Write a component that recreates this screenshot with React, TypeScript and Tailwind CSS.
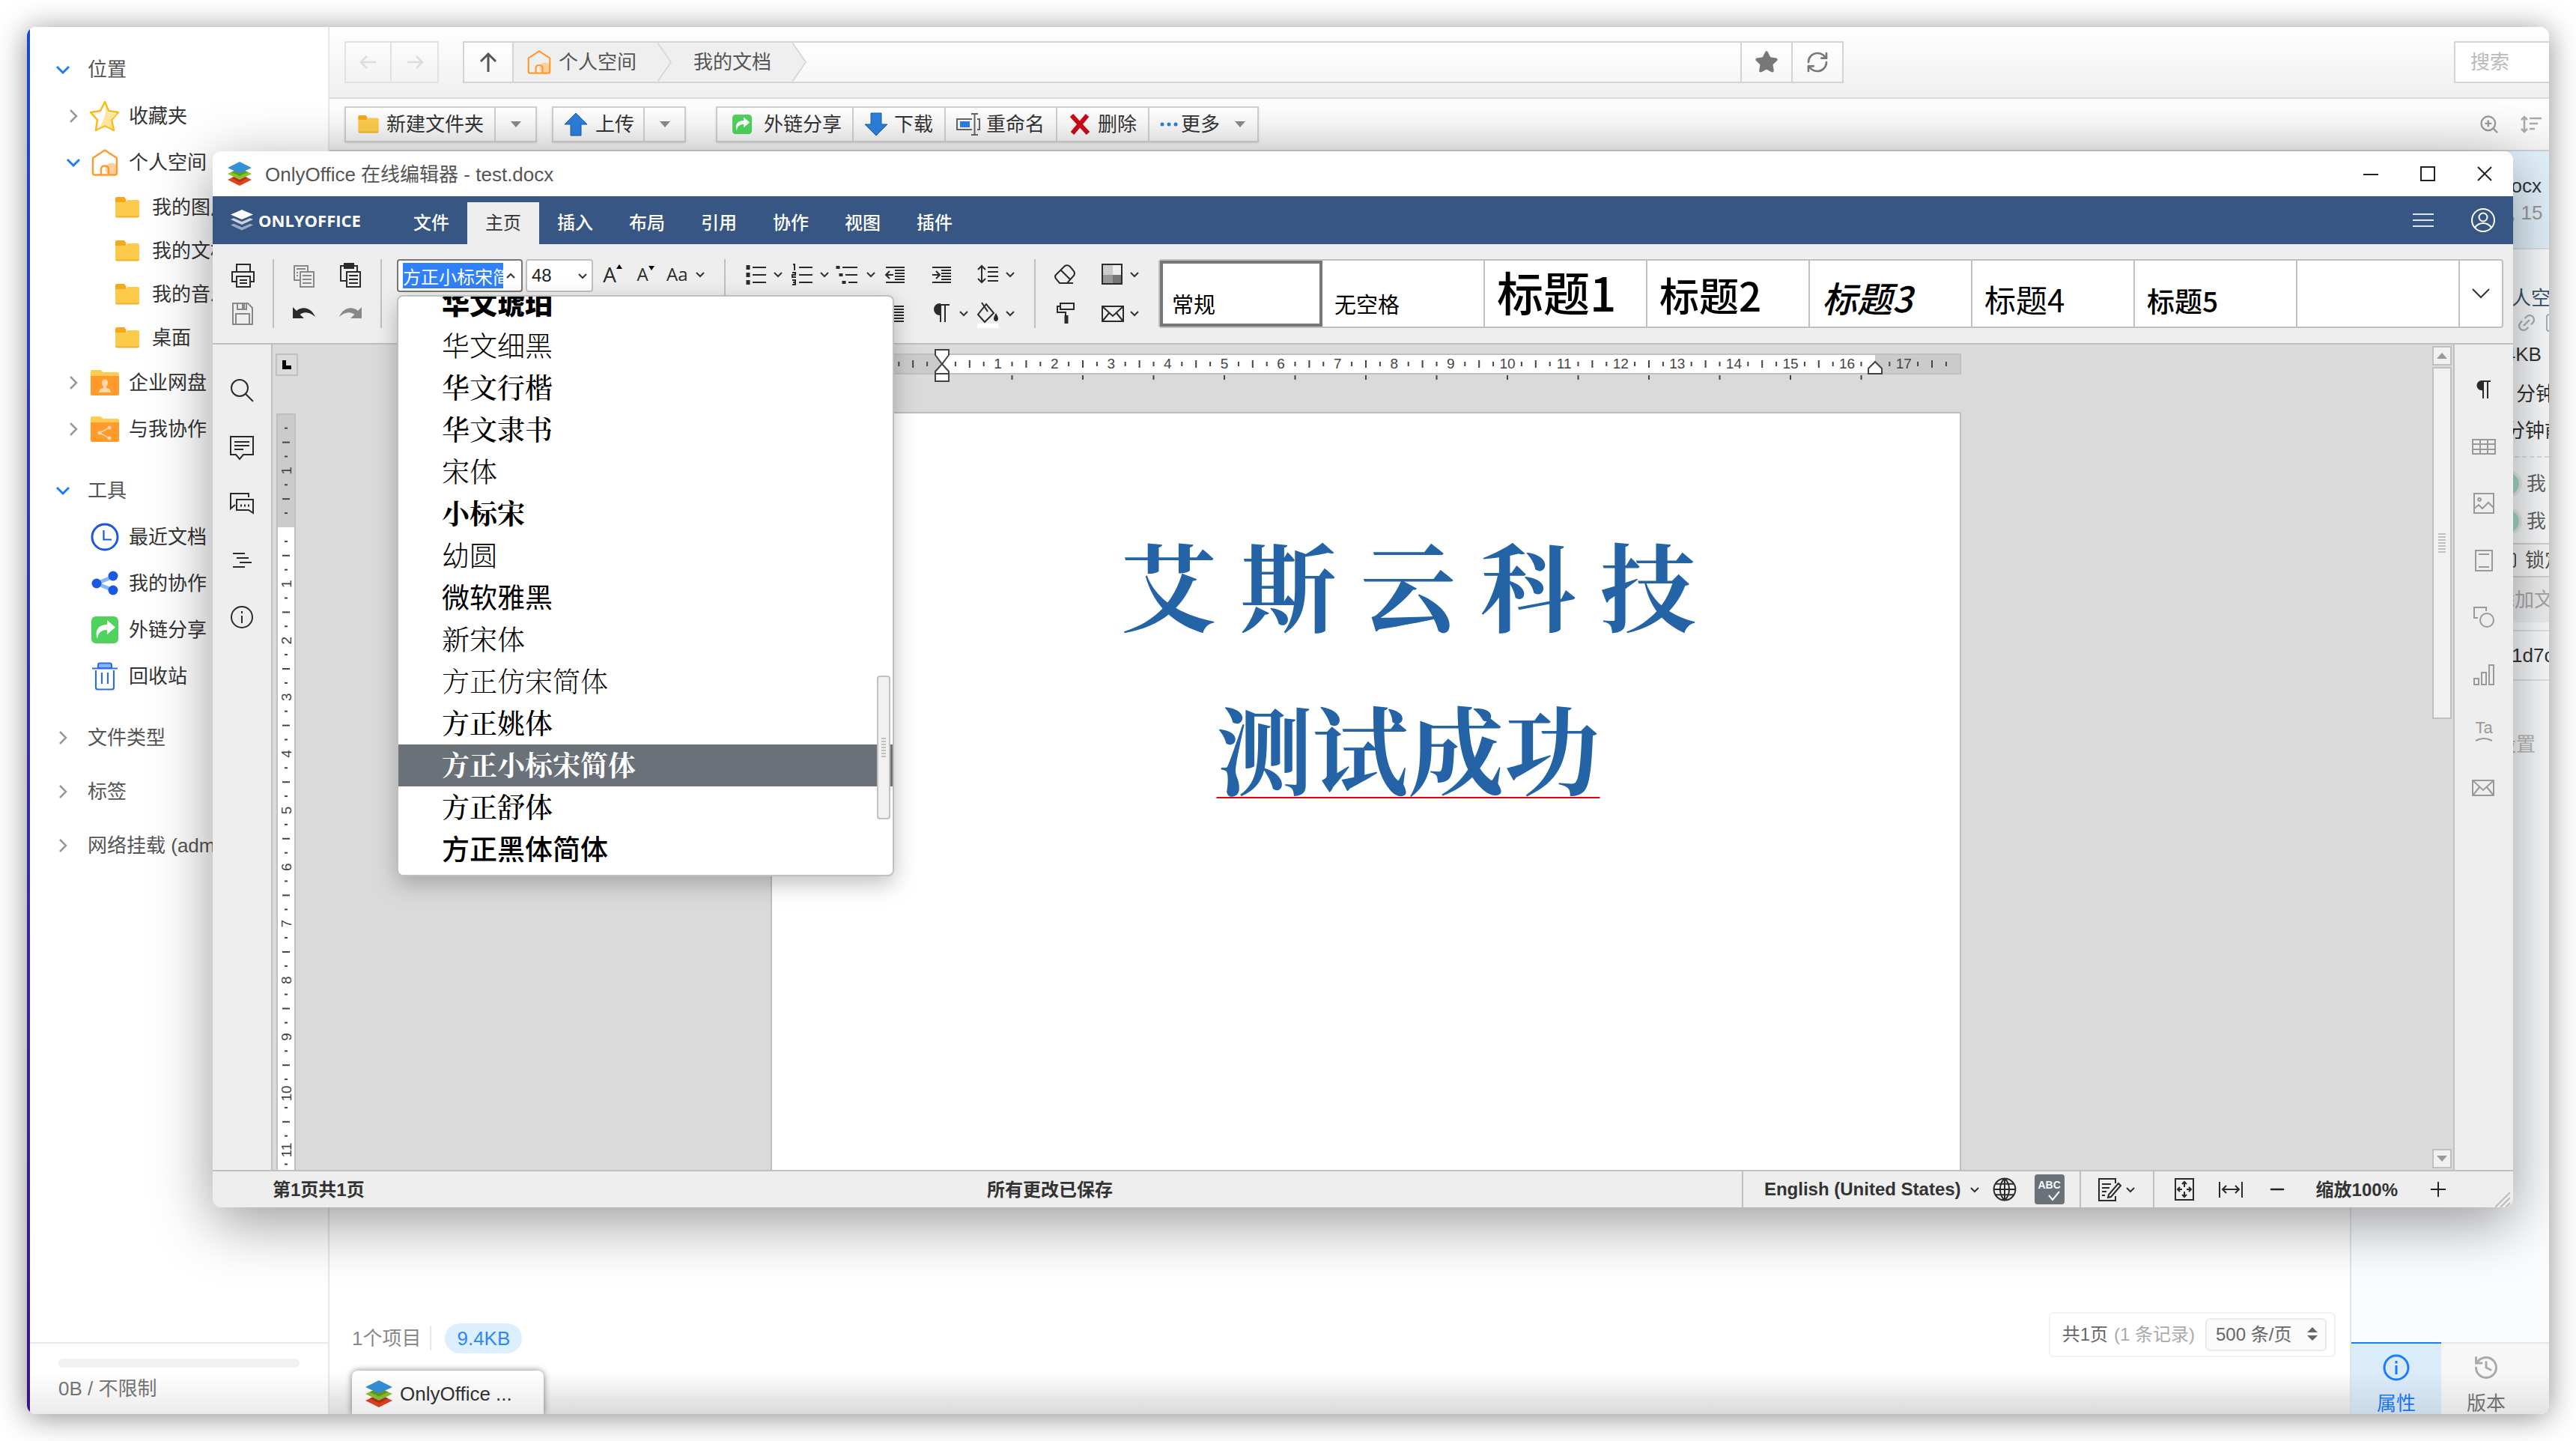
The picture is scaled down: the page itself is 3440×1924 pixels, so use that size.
import type { ReactNode } from 'react';
import { Plus, Minus, RefreshCw, Star, ZoomIn, Link2, History } from 'lucide-react';

const FONT = "font-['Liberation_Sans','Noto_Sans_CJK_SC',sans-serif]";
const SERIF = "font-['Liberation_Serif','Noto_Serif_CJK_SC','Noto_Sans_CJK_SC',serif]";

interface IconProps {
  size?: number;
  className?: string;
  strokeWidth?: number;
  children: ReactNode;
}

// 20x20 line icon shared by the editor toolbars
const Icon = ({ size = 40, className = 'text-[#2a2a2a]', strokeWidth = 1, children }: IconProps) => (
  <svg
    width={size}
    height={size}
    viewBox="0 0 20 20"
    fill="none"
    stroke="currentColor"
    strokeWidth={strokeWidth}
    className={className}
  >
    {children}
  </svg>
);

const Caret = ({ up = false }: { up?: boolean }) => (
  <svg width="20" height="40" viewBox="0 0 20 40" fill="none" stroke="#333" strokeWidth="2" className="shrink-0">
    <path d={up ? 'M5 23l5-5 5 5' : 'M5 18l5 5 5-5'} />
  </svg>
);

const OfficeLogo = ({ className = 'h-8 w-8' }: { className?: string }) => (
  <svg viewBox="0 0 32 32" className={className}>
    <path d="M0 24 16 16.500 32 24 16 32Z" fill="#e2431e" />
    <path d="M5 21.500 16 16.500 27 21.500 16 27Z" fill="#b5301a" />
    <path d="M0 16 16 9 32 16 16 24Z" fill="#8cc02c" />
    <path d="M5 13.800 16 9 27 13.800 16 19Z" fill="#5f9a1c" />
    <path d="M0 8 16 0 32 8 16 15.500Z" fill="#3590d8" />
  </svg>
);

const Folder = ({ className = 'h-7 w-8' }: { className?: string }) => (
  <svg viewBox="0 0 32 28" className={className}>
    <path d="M0 2q0-2 2-2h10l3 4h-1v4H0z" fill="#f5a81c" />
    <path d="M0 7h13l3-3h14q2 0 2 2v19q0 2-2 2H2q-2 0-2-2z" fill="#fccb4b" />
    <path d="M0 25.500h32q0 2-2 2H2q-2 0-2-2z" fill="#f0b02c" />
  </svg>
);

const BadgeFolder = ({ children }: { children: ReactNode }) => (
  <svg viewBox="0 0 38 34" className="h-[34px] w-[38px]">
    <path d="M0 2q0-2 2-2h11l4 3h19q2 0 2 2v8H0z" fill="#ffcb52" />
    <path d="M0 8h38v24q0 2-2 2H2q-2 0-2-2z" fill="#ff9a2b" />
    {children}
  </svg>
);

const Home = ({ className = 'h-9 w-9' }: { className?: string }) => (
  <svg viewBox="0 0 36 36" fill="none" stroke="#ff9a2b" strokeWidth="2.400" strokeLinejoin="round" className={className}>
    <circle cx="27" cy="27" r="8.500" fill="#ffcf9e" stroke="none" />
    <path d="M2 12 18 1.500 34 12v20q0 2.500-2.500 2.500h-27Q2 34.500 2 32z" />
    <path d="M13 34V27q0-4.500 5-4.500t5 4.500v7" />
  </svg>
);

const ShareBadge = ({ className = 'h-9 w-9' }: { className?: string }) => (
  <svg viewBox="0 0 36 36" className={className}>
    <rect width="36" height="36" rx="6" fill="#4fd35c" />
    <path d="M8 30C4 18 10 11 21 11V5l11 9.500L21 24v-6c-7 0-12 3-13 12z" fill="#fff" />
  </svg>
);

const TreeChevron = ({ open = false }: { open?: boolean }) =>
  open ? (
    <svg viewBox="0 0 20 20" className="h-5 w-5 shrink-0" fill="none" stroke="#1a7bff" strokeWidth="3">
      <path d="M2 6l8 8 8-8" />
    </svg>
  ) : (
    <svg viewBox="0 0 20 20" className="h-5 w-5 shrink-0" fill="none" stroke="#999" strokeWidth="2.500">
      <path d="M6 2l8 8-8 8" />
    </svg>
  );

interface TreeItemProps {
  label: string;
  icon: ReactNode;
  chevron?: 'open' | 'closed';
  child?: boolean;
}

const TreeItem = ({ label, icon, chevron, child = false }: TreeItemProps) => (
  <li>
    <a
      href="#"
      className={
        child
          ? 'flex h-[58px] items-center gap-[17px] pl-[114px] whitespace-nowrap'
          : 'flex h-[62px] items-center gap-3 pl-12 whitespace-nowrap'
      }
    >
      {!child && <span className="w-5">{chevron && <TreeChevron open={chevron === 'open'} />}</span>}
      <span className={child ? 'w-8' : 'flex w-10 justify-center'}>{icon}</span>
      <span className="text-[26px] text-[#333]">{label}</span>
    </a>
  </li>
);

const TreeGroup = ({ label, open = false, children }: { label: string; open?: boolean; children?: ReactNode }) => (
  <section className="mb-2.5">
    <button className="flex h-[62px] w-full items-center gap-[23px] pl-[34px] text-[26px] whitespace-nowrap text-[#555]">
      <TreeChevron open={open} />
      {label}
    </button>
    {children && <ul className="pb-2.5">{children}</ul>}
  </section>
);

const Sidebar = () => (
  <nav className="flex w-[400px] shrink-0 flex-col border-r-2 border-[#e6e6e6] bg-white">
    <div className="min-h-0 flex-1 overflow-hidden pt-[26px]">
      <TreeGroup label="位置" open>
        <TreeItem
          label="收藏夹"
          chevron="closed"
          icon={
            <svg viewBox="0 0 40 42" className="h-[42px] w-10 shrink-0" strokeLinejoin="round">
              <path d="M20 2l5 12 13 2-9 10 3 14-12-6-12 6 2-14-9-10 13-2z" fill="#fff" stroke="#fdb813" strokeWidth="2.500" />
              <path d="M21 8l4 9 11 1-8 8 2 12-10-5-8 4c6-8 10-18 9-29z" fill="#ffe69a" />
            </svg>
          }
        />
        <TreeItem label="个人空间" chevron="open" icon={<Home />} />
        <TreeItem label="我的图片" child icon={<Folder />} />
        <TreeItem label="我的文档" child icon={<Folder />} />
        <TreeItem label="我的音乐" child icon={<Folder />} />
        <TreeItem label="桌面" child icon={<Folder />} />
        <TreeItem
          label="企业网盘"
          chevron="closed"
          icon={
            <BadgeFolder>
              <path d="M15 17a4 4.500 0 1 1 8 0q0 3-2 5v2q6 1 6 6H11q0-5 6-6v-2q-2-2-2-5z" fill="#ffd9ad" />
            </BadgeFolder>
          }
        />
        <TreeItem
          label="与我协作"
          chevron="closed"
          icon={
            <BadgeFolder>
              <path d="M25 15 12 22l13 7" fill="none" stroke="#ffd9ad" strokeWidth="1.500" />
              <circle cx="25" cy="15" r="2.500" fill="#ffd9ad" />
              <circle cx="12" cy="22" r="2.500" fill="#ffd9ad" />
              <circle cx="25" cy="29" r="2.500" fill="#ffd9ad" />
            </BadgeFolder>
          }
        />
      </TreeGroup>
      <TreeGroup label="工具" open>
        <TreeItem
          label="最近文档"
          icon={
            <svg viewBox="0 0 38 38" className="h-[38px] w-[38px]" fill="none" stroke="#1b57e0">
              <circle cx="19" cy="19" r="17" strokeWidth="3" />
              <path d="M17.500 10v12.500H28" strokeWidth="2.200" />
            </svg>
          }
        />
        <TreeItem
          label="我的协作"
          icon={
            <svg viewBox="0 0 38 34" className="h-[34px] w-[38px]">
              <path d="M30 8 8 17l22 9" fill="none" stroke="#86b6ff" strokeWidth="5" />
              <circle cx="30" cy="7" r="6.500" fill="#1b57e0" />
              <circle cx="8" cy="17" r="6.500" fill="#1b57e0" />
              <circle cx="30" cy="26" r="6.500" fill="#1b57e0" />
            </svg>
          }
        />
        <TreeItem label="外链分享" icon={<ShareBadge />} />
        <TreeItem
          label="回收站"
          icon={
            <svg viewBox="0 0 36 38" className="h-[38px] w-9" fill="none" stroke="#2f6fe0" strokeWidth="2.200">
              <path d="M9 8V4q0-2.500 2.500-2.500h13Q27 1.500 27 4v4z" fill="#86b6ff" />
              <path d="M1 8.500h34M6 11v23q0 2.500 2.500 2.500h19q2.500 0 2.500-2.500V11M14 14v15M22 14v15" />
            </svg>
          }
        />
      </TreeGroup>
      <TreeGroup label="文件类型" />
      <TreeGroup label="标签" />
      <TreeGroup label="网络挂载 (admin)" />
    </div>
    <div className="h-24 border-t-2 border-[#e8e8e8] px-[38px] pt-5">
      <div className="h-3 rounded-full bg-[#f1f1f1]" />
      <p className="mt-3 text-[26px] leading-8 text-[#777]">0B / 不限制</p>
    </div>
  </nav>
);

const AddressBar = () => (
  <header className="flex h-24 items-center border-b-2 border-[#dadada] bg-gradient-to-b from-white to-[#efefef] pl-5">
    <div className="flex h-14 divide-x-2 divide-[#e2e2e2] border-2 border-[#e2e2e2]">
      {['M14 4 6 12l8 8M6 12h20', 'M18 4l8 8-8 8M26 12H6'].map((d, i) => (
        <button key={d} aria-label={i ? '前进' : '后退'} className="flex w-[61px] items-center justify-center">
          <svg viewBox="0 0 32 24" className="h-6 w-8" fill="none" stroke="#dcdcdc" strokeWidth="2.500">
            <path d={d} />
          </svg>
        </button>
      ))}
    </div>
    <div className="ml-8 flex h-14 w-[1844px] shrink border-2 border-[#d4d4d4] bg-gradient-to-b from-white to-[#f6f6f6]">
      <button aria-label="上级" className="flex w-[66px] items-center justify-center border-r-2 border-[#d4d4d4]">
        <svg viewBox="0 0 24 28" className="h-7 w-6" fill="none" stroke="#555" strokeWidth="3">
          <path d="M12 27V4M2 13 12 3l10 10" />
        </svg>
      </button>
      <a href="#" className="flex w-[192px] items-center gap-2.5 bg-[#efefef] pl-[18px] text-[26px] text-[#555]">
        <Home className="h-8 w-8" />
        个人空间
      </a>
      <svg viewBox="0 0 20 52" className="h-full w-5 bg-[#efefef]" fill="none" stroke="#d8d8d8" strokeWidth="2">
        <path d="M0 0l18 26L0 52" />
      </svg>
      <a href="#" className="flex w-[160px] items-center bg-[#efefef] pl-7 text-[26px] text-[#555]">
        我的文档
      </a>
      <svg viewBox="0 0 20 52" className="h-full w-5" stroke="#d8d8d8" strokeWidth="2">
        <path d="M0 0l18 26L0 52" fill="#efefef" />
      </svg>
      <div className="flex-1" />
      <button aria-label="收藏" className="flex w-[68px] items-center justify-center border-l-2 border-[#d4d4d4]">
        <Star className="h-8 w-8 fill-[#777] text-[#777]" />
      </button>
      <button aria-label="刷新" className="flex w-[68px] items-center justify-center border-l-2 border-[#d4d4d4]">
        <RefreshCw className="h-8 w-8 text-[#777]" />
      </button>
    </div>
    <div className="flex-1" />
    <input
      aria-label="搜索"
      placeholder="搜索"
      className="h-14 w-[127px] border-2 border-r-0 border-[#d4d4d4] bg-white pl-5 text-[26px] placeholder:text-[#bbb]"
    />
  </header>
);

const TOOL = 'flex items-center whitespace-nowrap text-[26px] text-[#333]';
const TOOL_GROUP = 'flex h-12 divide-x-2 divide-[#cfcfcf] border-2 border-[#cfcfcf] bg-gradient-to-b from-white to-[#f2f2f2] shadow-sm';

const Triangle = () => (
  <svg viewBox="0 0 14 8" className="h-2 w-3.5">
    <path d="M0 0h14L7 8z" fill="#888" />
  </svg>
);

const FileToolbar = () => (
  <div className="flex h-[70px] items-center border-b-2 border-[#cfcfcf] bg-gradient-to-b from-white to-[#f2f2f2] pl-5">
    <div className={TOOL_GROUP}>
      <button className={`${TOOL} w-[200px] gap-2.5 pl-4`}>
        <Folder className="h-6 w-7" />
        新建文件夹
      </button>
      <button aria-label="新建选项" className="flex w-[53px] items-center justify-center">
        <Triangle />
      </button>
    </div>
    <div className={`${TOOL_GROUP} ml-5`}>
      <button className={`${TOOL} w-[122px] gap-2.5 pl-3.5`}>
        <svg viewBox="0 0 32 32" className="h-8 w-8">
          <path d="M16 1l15 15h-8v15H9V16H1z" fill="#2b7fdc" stroke="#1b5fae" />
        </svg>
        上传
      </button>
      <button aria-label="上传选项" className="flex w-[53px] items-center justify-center">
        <Triangle />
      </button>
    </div>
    <div className={`${TOOL_GROUP} ml-10`}>
      <button className={`${TOOL} w-[182px] gap-4 pl-5`}>
        <ShareBadge className="h-[26px] w-[26px]" />
        外链分享
      </button>
      <button className={`${TOOL} w-[123px] gap-2 pl-3.5`}>
        <svg viewBox="0 0 32 32" className="h-8 w-8">
          <path d="M16 31 1 16h8V1h14v15h8z" fill="#2b7fdc" stroke="#1b5fae" />
        </svg>
        下载
      </button>
      <button className={`${TOOL} w-[149px] gap-2 pl-3.5`}>
        <svg viewBox="0 0 32 32" className="h-8 w-8" fill="none" stroke="#666" strokeWidth="2">
          <path d="M21 9H1v14h20M28 9h3v14h-3M20 2h9M20 30h9M24.500 2v28" />
          <rect x="5" y="12" width="13" height="8" fill="#2b7fdc" stroke="none" />
        </svg>
        重命名
      </button>
      <button className={`${TOOL} w-[123px] gap-2.5 pl-4`}>
        <svg viewBox="0 0 28 28" className="h-7 w-7" stroke="#cc0a18" strokeWidth="6">
          <path d="M3 2l22 24M24 2 4 26" />
        </svg>
        删除
      </button>
      <button className={`${TOOL} w-[144px] gap-1 pl-3.5`}>
        <svg viewBox="0 0 24 6" className="h-1.5 w-6" fill="#2b7fdc">
          <circle cx="3" cy="3" r="2.500" />
          <circle cx="12" cy="3" r="2.500" />
          <circle cx="21" cy="3" r="2.500" />
        </svg>
        更多
        <span className="ml-4">
          <Triangle />
        </span>
      </button>
    </div>
    <div className="flex-1" />
    <button aria-label="缩放" className="mr-7">
      <ZoomIn className="h-7 w-7 text-[#999]" />
    </button>
    <button aria-label="排序" className="mr-2.5">
      <svg viewBox="0 0 28 24" className="h-6 w-7" fill="none" stroke="#aaa" strokeWidth="2.500">
        <path d="M5 2v20M1 6l4-4 4 4M1 18l4 4 4-4M12 4h16M12 11h11M12 18h7" />
      </svg>
    </button>
  </div>
);

const DetailsPanel = () => (
  <aside className="flex w-[266px] shrink-0 flex-col overflow-hidden border-l-2 border-[#e0e4ea] bg-[#fbfcfe] text-[26px] whitespace-nowrap text-[#333]">
    <div className="h-[131px] shrink-0 border-b-2 border-[#dcdfe4] bg-[#e1f1fb] pt-7">
      <p className="pl-[150px] leading-9">test.docx</p>
      <p className="pl-[212px] leading-9 text-[#999]">, 15</p>
    </div>
    <div className="border-b-2 border-dashed border-[#dcdfe4] pt-[46px] pb-2.5">
      <p className="pl-[188px] leading-[38px] text-[#3d5470]">个人空间</p>
      <div className="flex h-7 items-center gap-3 pl-[220px] text-[#aab0bd]">
        <Link2 className="h-7 w-7 shrink-0 -rotate-45" />
        <span className="h-6 w-4 shrink-0 rounded-sm border-2 border-[#aab0bd]" />
      </div>
      <p className="pl-[183px] leading-[56px]">9.4KB</p>
      <p className="pl-[220px] leading-[50px]">分钟前</p>
      <p className="pl-[206px] leading-[48px]">分钟前</p>
    </div>
    <div className="pt-2.5 text-[#666]">
      {['创建者', '修改者'].map((owner) => (
        <p key={owner} className="flex h-[50px] items-center gap-1.5 pl-[192px]">
          <span className="h-9 w-9 shrink-0 rounded-full border-4 border-[#ececec] bg-[#a5dccf]" />
          我自己
        </p>
      ))}
    </div>
    <button className="mt-1 flex h-[46px] shrink-0 items-center gap-3 border-y-2 border-[#d4d4d4] bg-[#f8f8f8] pl-[204px] text-[#555]">
      <span className="h-5 w-4 shrink-0 rounded-sm border-2 border-[#555]" />
      锁定
    </button>
    <p className="mb-2.5 bg-[#eef0f2] pl-[192px] leading-[60px] text-[#aaa]">添加文件说明</p>
    <p className="border-y-2 border-[#e0e2e6] pl-[214px] leading-[64px]">1d7c</p>
    <p className="pt-[60px] pl-[194px] leading-[50px] text-[#bbb]">设置</p>
    <div className="flex-1" />
    <div className="flex h-24">
      <button className="flex w-[120px] shrink-0 flex-col items-center gap-3 border-t-2 border-[#1a7bff] bg-[#daebf9] pt-3.5 text-[#1a7bff]">
        <svg viewBox="0 0 36 36" className="h-9 w-9 shrink-0" fill="none" stroke="currentColor" strokeWidth="3">
          <circle cx="18" cy="18" r="16" />
          <path d="M18 15v12M18 9v3.500" />
        </svg>
        <span className="leading-9">属性</span>
      </button>
      <button className="flex w-[120px] flex-1 flex-col items-center gap-3 border-t-2 border-[#e6e6e6] bg-[#f7f7f7] pt-3.5 pr-6 text-[#777]">
        <History className="h-9 w-9 shrink-0 text-[#aaa]" />
        <span className="leading-9">版本</span>
      </button>
    </div>
  </aside>
);

const FileArea = () => (
  <main className="flex min-w-0 flex-1 flex-col bg-white">
    <div className="flex-1" />
    <div className="flex h-[78px] items-start pr-[19px] pl-[30px]">
      <div className="mt-[15px] flex h-10 items-center text-[26px] text-[#888]">
        1个项目
        <span className="ml-3 h-8 w-0.5 bg-[#e6e6e6]" />
        <span className="ml-[18px] rounded-full bg-[#dceffe] px-4 leading-10 text-[#2f86f6]">9.4KB</span>
      </div>
      <div className="flex-1" />
      <div className="flex h-[60px] items-center rounded-md border-2 border-[#f1f1f1] pr-2.5 pl-4 text-2xl text-[#666]">
        共1页<span className="ml-2 text-[#aaa]">(1 条记录)</span>
        <span className="relative ml-3.5">
          <select
            aria-label="每页条数"
            className="h-[44px] w-[162px] appearance-none rounded-md border-2 border-[#eaeaea] bg-[#fafafa] pl-3"
          >
            <option>500 条/页</option>
          </select>
          <svg viewBox="0 0 14 18" className="pointer-events-none absolute top-3 right-3 h-[18px] w-3.5" fill="#666">
            <path d="M0 7h14L7 0zM0 11h14l-7 7z" />
          </svg>
        </span>
      </div>
    </div>
    <div className="flex h-[58px] bg-gradient-to-b from-white to-[#ececec] pl-[30px]">
      <button className="flex w-64 items-center gap-2.5 rounded-t-lg bg-white pt-1 pl-[18px] text-[26px] text-[#333] shadow-[0_0_8px_rgba(0,0,0,0.5)]">
        <OfficeLogo className="h-9 w-9" />
        OnlyOffice ...
      </button>
    </div>
  </main>
);

/* ---------- document editor ---------- */

const TABS = ['文件', '主页', '插入', '布局', '引用', '协作', '视图', '插件'];

const TitleBar = () => (
  <div className="flex h-[60px] shrink-0 items-center bg-white pl-5">
    <OfficeLogo />
    <h1 className="ml-[18px] pt-0.5 text-[26px] text-[#555]">OnlyOffice 在线编辑器 - test.docx</h1>
    <div className="flex-1" />
    {['M0 11h20', 'M1 1h18v18H1z', 'M1 1l18 18M19 1 1 19'].map((d, i) => (
      <button key={d} aria-label={['最小化', '最大化', '关闭'][i]} className="flex h-full w-[76px] items-center justify-center">
        <svg viewBox="0 0 20 20" className="h-5 w-5" fill="none" stroke="#222" strokeWidth="2">
          <path d={d} />
        </svg>
      </button>
    ))}
  </div>
);

const TabBar = () => (
  <div className="flex h-16 shrink-0 items-end bg-[#375683]">
    <div className="flex h-16 w-[244px] items-center pl-6">
      <svg viewBox="0 0 30 28" className="h-7 w-[30px]" fill="#fff">
        <path d="M0 6.500 15 0l15 6.500L15 13z" />
        <path d="M0 13l4-1.800 11 4.800 11-4.800 4 1.800-15 7z" opacity=".75" />
        <path d="M0 20.500l4-1.800 11 4.800 11-4.800 4 1.800-15 7z" opacity=".5" />
      </svg>
      <span className="ml-[7px] font-['Open_Sans',sans-serif] text-[22px] font-bold text-white">ONLYOFFICE</span>
    </div>
    {TABS.map((tab) => (
      <button
        key={tab}
        className={
          tab === '主页'
            ? 'h-14 w-24 bg-[#eeeeee] text-2xl text-[#333]'
            : 'h-14 w-24 text-2xl font-medium text-white'
        }
      >
        {tab}
      </button>
    ))}
    <div className="flex-1" />
    <button aria-label="菜单" className="mr-[50px] mb-[22px]">
      <svg viewBox="0 0 28 20" className="h-5 w-7" stroke="#fff" strokeWidth="2" opacity=".85">
        <path d="M0 2h28M0 10h28M0 18h28" />
      </svg>
    </button>
    <button aria-label="用户" className="mr-6 mb-4">
      <svg viewBox="0 0 32 32" className="h-8 w-8" fill="none" stroke="#fff" strokeWidth="2">
        <circle cx="16" cy="16" r="15" />
        <circle cx="16" cy="12" r="5.500" />
        <path d="M5 26q4-6 11-6t11 6" />
      </svg>
    </button>
  </div>
);

const Sep = () => <div className="mx-5 h-[92px] w-0.5 shrink-0 bg-[#c0c0c0]" />;

const ToolButton = ({ label, caret = false, children }: { label: string; caret?: boolean; children: ReactNode }) => (
  <button aria-label={label} className="flex h-10 w-[62px] shrink-0 items-center">
    {children}
    {caret && <Caret />}
  </button>
);

const JUSTIFY = 'M4 5.500h12M4 7.500h12M4 9.500h12M4 11.500h12M4 13.500h12M4 15.500h12';

const FONTS = [
  { name: '华文琥珀', style: 'font-black' },
  { name: '华文细黑', style: 'font-light' },
  { name: '华文行楷', style: `${SERIF} font-medium` },
  { name: '华文隶书', style: `${SERIF} font-medium` },
  { name: '宋体', style: `${SERIF} font-light` },
  { name: '小标宋', style: `${SERIF} font-bold` },
  { name: '幼圆', style: 'font-light' },
  { name: '微软雅黑', style: 'font-normal' },
  { name: '新宋体', style: `${SERIF} font-light` },
  { name: '方正仿宋简体', style: `${SERIF} font-extralight` },
  { name: '方正姚体', style: `${SERIF} font-medium` },
  { name: '方正小标宋简体', style: `${SERIF} font-bold` },
  { name: '方正舒体', style: `${SERIF} font-medium` },
  { name: '方正黑体简体', style: 'font-medium' },
];

const FontMenu = () => (
  <div className="absolute top-12 left-0 z-20 w-[664px] overflow-hidden rounded-lg border-2 border-[#c0c0c0] bg-white shadow-[0_10px_30px_rgba(0,0,0,0.25)]">
    <ul role="listbox" aria-label="字体列表" className="-mt-[18px] pb-1.5">
      {FONTS.map((font) => {
        const selected = font.name === '方正小标宋简体';
        return (
          <li
            key={font.name}
            role="option"
            aria-selected={selected}
            className={`flex h-14 items-center pt-0.5 pl-[58px] text-[37px] leading-none ${font.style} ${
              selected ? 'bg-[#6a7178] text-white' : 'text-black'
            }`}
          >
            {font.name}
          </li>
        );
      })}
    </ul>
    <div className="absolute right-[3px] bottom-[74px] flex h-48 w-[18px] items-center justify-center rounded border-2 border-[#c0c0c0] bg-[#f1f1f1]">
      <svg viewBox="0 0 6 26" className="h-[26px] w-1.5" stroke="#c0c0c0" strokeWidth="2">
        <path d="M0 1h6M0 5h6M0 9h6M0 13h6M0 17h6M0 21h6M0 25h6" />
      </svg>
    </div>
  </div>
);

const STYLES = [
  { name: '常规', style: 'text-[29px]' },
  { name: '无空格', style: 'text-[29px]' },
  { name: '标题1', style: 'text-[62px] font-medium' },
  { name: '标题2', style: 'text-[53px] font-medium' },
  { name: '标题3', style: 'text-[47px] font-medium italic' },
  { name: '标题4', style: 'text-[42px] text-[#222]' },
  { name: '标题5', style: 'text-[37px] font-medium text-[#333]' },
  { name: '', style: '' },
];

const Toolbar = () => (
  <div className="flex shrink-0 border-b-2 border-[#c0c0c0] bg-[#eeeeee] py-5 pl-5">
    <div className="flex w-10 flex-col gap-3">
      <button aria-label="打印" className="h-10">
        <Icon>
          <path d="M6 8V3.500h9V8M6 15H3V8.500h14.500V15H15M6 11.500h9v7H6zM8 14h5M8 16h5" />
        </Icon>
      </button>
      <button aria-label="保存" className="h-10">
        <Icon className="text-[#888]">
          <path d="M3.500 3.500h10l3 3v11h-13zM6.500 3.500v4h6v-4M5.500 17.500v-7h9v7" />
          <path d="M10.500 4v3" strokeWidth="2" />
        </Icon>
      </button>
    </div>
    <Sep />
    <div className="grid grid-cols-2 gap-x-[22px] gap-y-3">
      <button aria-label="复制" className="h-10 w-10">
        <Icon className="text-[#888]">
          <path d="M7 14H3.500V4.500h9V8M5 6.500h6M5 9h1M5 11h1M7.500 8.500h9v10h-9zM9 11h6M9 13.500h6M9 16h6" />
        </Icon>
      </button>
      <button aria-label="粘贴" className="h-10 w-10">
        <Icon>
          <path d="M7 14.500H3.500v-10h11V8M7.500 8.500h9v10h-9zM9 11h6M9 13.500h6M9 16h6" />
          <path d="M6 3h6v3H6z" fill="currentColor" />
        </Icon>
      </button>
      <button aria-label="撤销" className="h-10 w-10">
        <Icon>
          <path d="M2.500 6v7.500H10L7.300 11c3-2.500 7-1.500 10.200 1.500C15 6.500 9 5 5 8.500z" fill="currentColor" stroke="none" />
        </Icon>
      </button>
      <button aria-label="重做" className="h-10 w-10">
        <Icon className="text-[#888]">
          <path d="M17.500 6v7.500H10l2.700-2.500c-3-2.500-7-1.500-10.200 1.500C5 6.500 11 5 15 8.500z" fill="currentColor" stroke="none" />
        </Icon>
      </button>
    </div>
    <Sep />
    <div className="relative flex w-[417px] items-start">
      <div className="flex h-11 w-[168px] items-center rounded border-2 border-[#777] bg-white pl-1.5">
        <input
          aria-label="字体"
          defaultValue="方正小标宋简体"
          className="h-[34px] w-[134px] min-w-0 bg-[#2f80fb] text-2xl text-white"
        />
        <Caret up />
      </div>
      <div className="ml-1 flex h-11 w-[90px] items-center rounded border-2 border-[#c0c0c0] bg-white pl-1.5">
        <input aria-label="字号" defaultValue="48" className="w-[58px] min-w-0 text-2xl text-[#222]" />
        <Caret />
      </div>
      <button
        aria-label="增大字号"
        className="ml-1 flex h-10 w-11 items-center justify-center font-['Open_Sans',sans-serif] text-[28px] text-[#2a2a2a]"
      >
        A
        <svg viewBox="0 0 8 6" className="mb-5 h-1.5 w-2">
          <path d="M0 6h8L4 0z" />
        </svg>
      </button>
      <button
        aria-label="减小字号"
        className="flex h-10 w-11 items-center justify-center font-['Open_Sans',sans-serif] text-2xl text-[#2a2a2a]"
      >
        A
        <svg viewBox="0 0 8 6" className="mb-4 h-1.5 w-2">
          <path d="M0 0h8L4 6z" />
        </svg>
      </button>
      <button
        aria-label="更改大小写"
        className="ml-1.5 flex h-10 items-center gap-1.5 font-['Open_Sans',sans-serif] text-2xl text-[#2a2a2a]"
      >
        Aa
        <Caret />
      </button>
      <FontMenu />
    </div>
    <Sep />
    <div className="flex flex-col gap-3">
      <div className="flex">
        <ToolButton label="项目符号" caret>
          <Icon>
            <path d="M8 5.500h9M8 10.500h9M8 15.500h9" />
            <path d="M5 4v3M5 9v3M5 14v3" strokeWidth="2.500" />
          </Icon>
        </ToolButton>
        <ToolButton label="编号" caret>
          <Icon>
            <path d="M8 5.500h9M8 10.500h9M8 15.500h9M4 3.500h1v4M3.500 9h2v1.500h-2V12h2.500M3.500 14h2v3h-2M4 15.500h1.500" />
          </Icon>
        </ToolButton>
        <ToolButton label="多级列表" caret>
          <Icon>
            <path d="M6 5.500h10M8 10.500h8M10 15.500h6" />
            <path d="M3 4.500v2M5 9.500v2M7 14.500v2" strokeWidth="2.500" />
          </Icon>
        </ToolButton>
        <ToolButton label="减少缩进">
          <Icon>
            <path d="M4 5.500h12.500M10 7.500h6.500M10 9.500h6.500M10 11.500h6.500M10 13.500h6.500M4 15.500h12.500M4 10.500h5M6.500 8 4 10.500 6.500 13" />
          </Icon>
        </ToolButton>
        <ToolButton label="增加缩进">
          <Icon>
            <path d="M4 5.500h12.500M10 7.500h6.500M10 9.500h6.500M10 11.500h6.500M10 13.500h6.500M4 15.500h12.500M4 10.500h5M6.500 8 9 10.500 6.500 13" />
          </Icon>
        </ToolButton>
        <ToolButton label="行距" caret>
          <Icon>
            <path d="M10 5.500h7M10 8.500h7M10 11.500h7M10 14.500h7M6 4.500v11M3.500 7 6 4.500 8.500 7M3.500 13 6 15.500 8.500 13" />
          </Icon>
        </ToolButton>
      </div>
      <div className="flex">
        {['左对齐', '居中', '右对齐', '两端对齐'].map((label) => (
          <ToolButton key={label} label={label}>
            <Icon>
              <path d={JUSTIFY} />
            </Icon>
          </ToolButton>
        ))}
        <ToolButton label="段落标记" caret>
          <Icon>
            <path d="M9 4a3.500 3.500 0 0 0 0 7z" fill="currentColor" />
            <path d="M8 4.500h7.500M9.500 4v12M12.500 4v12" />
          </Icon>
        </ToolButton>
        <ToolButton label="底纹" caret>
          <Icon>
            <path d="M9 4 3.500 11l4.500 5 6-6zM6 3l4 6" />
            <path d="M15.500 11q2 3.500 0 4-2-.500 0-4z" fill="currentColor" />
            <path d="M3 18.500h14" stroke="#fff" strokeWidth="3" />
          </Icon>
        </ToolButton>
      </div>
    </div>
    <Sep />
    <div className="grid grid-cols-2 gap-y-3">
      <ToolButton label="清除样式">
        <Icon>
          <path d="M9.500 4.500q2-1 3.500.500l2.500 3q1 1.500 0 3L11 16H6l-2.500-3q-1-1.500 0-2.500zM7 7.500l6 6M6 16h9" />
        </Icon>
      </ToolButton>
      <ToolButton label="颜色方案" caret>
        <Icon>
          <path d="M3.500 4h7v6.500h-7z" fill="#ccc" stroke="none" />
          <path d="M3.500 10.500h7V16h-7z" fill="#999" stroke="none" />
          <path d="M10.500 10.500h6V16h-6z" fill="#777" stroke="none" />
          <path d="M3.500 3.500h13v13h-13z" />
        </Icon>
      </ToolButton>
      <ToolButton label="格式刷">
        <Icon>
          <path d="M6.500 3.500h9v4h-9zM6 5.500H4.500v4H10V12" />
          <path d="M10.500 11.500V17" strokeWidth="2.500" />
        </Icon>
      </ToolButton>
      <ToolButton label="邮件合并" caret>
        <Icon>
          <path d="M3.500 5.500h14v10h-14zM3.500 5.500l7 6.500 7-6.500M3.500 15.500 8 10M17.500 15.500 13 10" />
        </Icon>
      </ToolButton>
    </div>
    <div className="mr-[13px] ml-5 grid h-[92px] min-w-0 flex-1 grid-cols-[repeat(8,minmax(0,1fr))_56px] rounded border-2 border-[#c0c0c0] bg-white">
      {STYLES.map(({ name, style }) => (
        <button
          key={name || 'more'}
          aria-label={name || '其他样式'}
          className={`flex min-w-0 items-end text-left leading-none whitespace-nowrap text-black font-['Noto_Sans_CJK_SC',sans-serif] ${style} ${
            name === '常规' ? 'border-4 border-[#777] pb-3 pl-3' : 'border-r-2 border-[#c0c0c0] pb-4 pl-4'
          }`}
        >
          {name}
        </button>
      ))}
      <button aria-label="展开样式" className="flex items-center justify-center">
        <svg viewBox="0 0 24 14" className="h-3.5 w-6" fill="none" stroke="#333" strokeWidth="2">
          <path d="M1 1l11 11L23 1" />
        </svg>
      </button>
    </div>
  </div>
);

const QUARTER = 18.9; // quarter of a centimetre

const HorizontalRuler = () => {
  const ticks = Array.from({ length: 83 }, (_, i) => i - 11);
  return (
    <svg viewBox="0 0 1590 40" className="h-10 w-[1590px] shrink-0 overflow-visible">
      <rect x="1" y="1" width="1588" height="26" fill="#cbcbcb" stroke="#c0c0c0" strokeWidth="2" />
      <rect x="228" y="2" width="1247" height="24" fill="#fff" />
      {ticks.map((q) => {
        const x = 228 + q * QUARTER;
        if (q === 0 || q === 66) return null;
        if (q % 4 === 0) {
          return (
            <text key={q} x={x} y="20" textAnchor="middle" fontSize="19" fill="#444">
              {Math.abs(q / 4)}
            </text>
          );
        }
        return <rect key={q} x={x - 1} y={q % 2 ? 11 : 9} width="2" height={q % 2 ? 6 : 10} fill="#444" />;
      })}
      {Array.from({ length: 13 }, (_, i) => (
        <rect key={i} x={227 + (i + 1) * 94.5} y="29" width="2" height="6" fill="#444" />
      ))}
      <g fill="#fff" stroke="#444" strokeWidth="2">
        <path d="M220-5h18v7l-9 12-9-12z" />
        <path d="M220 37V24l9-10 9 10v13zM220 27h18" />
        <path d="M1466 27v-7l9-9 9 9v7z" />
      </g>
    </svg>
  );
};

const VerticalRuler = () => (
  <svg className="mx-auto h-[2246px] w-[26px] shrink-0" viewBox="0 0 26 2246">
    <rect x="0" y="0" width="26" height="2246" fill="#c0c0c0" />
    <rect x="2" y="2" width="22" height="150" fill="#cbcbcb" />
    <rect x="2" y="152" width="22" height="2092" fill="#fff" />
    {Array.from({ length: 108 }, (_, i) => i - 7).map((q) => {
      const y = 152 + q * QUARTER;
      if (q === 0) return null;
      if (q % 4 === 0) {
        return (
          <text key={q} transform={`translate(20 ${y}) rotate(-90)`} textAnchor="middle" fontSize="19" fill="#444">
            {Math.abs(q / 4)}
          </text>
        );
      }
      return <rect key={q} x={q % 2 ? 11 : 8} y={y - 1} width={q % 2 ? 4 : 10} height="2" fill="#444" />;
    })}
  </svg>
);

const LEFT_TOOLS = [
  { label: '查找', d: 'M8.500 3.500a5.500 5.500 0 1 1 0 11 5.500 5.500 0 0 1 0-11zM12.500 13l5 5' },
  { label: '评论', d: 'M2.500 3.500h15v12h-6.500l-2.500 3-2.500-3h-3.500zM5 7h10M5 9.500h10M5 12h6' },
  { label: '聊天', d: 'M14.500 6V3.500h-12v10l3-2.500M6.500 7.500h11v9l-3-2h-8z' },
  { label: '标题', d: 'M4 5.500h8M6.500 8.500h8M8.500 11.500h8M4 14.500h8' },
  { label: '关于', d: 'M10 3a7 7 0 1 1 0 14 7 7 0 0 1 0-14zM10 9v5M10 6v1.500' },
];

const LeftPanel = () => (
  <div className="flex w-20 shrink-0 flex-col items-center gap-9 border-r-2 border-[#c0c0c0] bg-[#eeeeee] pt-10">
    {LEFT_TOOLS.map(({ label, d }) => (
      <button key={label} aria-label={label} className="h-10 w-10">
        <Icon>
          <path d={d} />
          {label === '聊天' && <path d="M9 11.500h1M11.500 11.500h1M14 11.500h1" strokeWidth="1.500" />}
        </Icon>
      </button>
    ))}
  </div>
);

const RIGHT_TOOLS = [
  { label: '表格设置', d: 'M2.500 5.500h15v9.500h-15zM2.500 8.500h15M2.500 12h15M7.500 5.500V15M12.500 5.500V15' },
  { label: '图片设置', d: 'M3.500 3.500h13v13h-13zM3.500 13.500 6.500 11l2.500 2.500 4-4 3.500 3.500M7 6.500a1 1 0 1 0 .1 0z' },
  { label: '页眉页脚', d: 'M4.500 3.500h11v13.500h-11zM6.500 6h7M6.500 14.500h7' },
  { label: '形状设置', d: 'M6 10.500H3.500v-7h8V6M12 7.500a4.500 4.500 0 1 1 0 9 4.500 4.500 0 0 1 0-9z' },
  { label: '图表设置', d: 'M3.500 13h3v4h-3zM8.500 9h3v8h-3zM13.500 4h3v13h-3z' },
];

const RightPanel = () => (
  <div className="flex w-20 shrink-0 flex-col items-center gap-9 border-l-2 border-[#c0c0c0] bg-[#eeeeee] pt-10">
    <button aria-label="段落设置" className="h-10 w-10">
      <Icon>
        <path d="M8.500 4.500a2.800 2.800 0 0 0 0 5.600z" fill="currentColor" />
        <path d="M8 4.500h6.500M9.500 4v12M12.500 4v12" />
      </Icon>
    </button>
    {RIGHT_TOOLS.map(({ label, d }) => (
      <button key={label} aria-label={label} className="h-10 w-10">
        <Icon className="text-[#999]">
          <path d={d} />
        </Icon>
      </button>
    ))}
    <button aria-label="艺术字" className="flex h-10 w-10 flex-col items-center pt-1 text-[22px] leading-6 text-[#999]">
      Ta
      <svg viewBox="0 0 24 6" className="h-1.5 w-6" fill="none" stroke="currentColor" strokeWidth="2">
        <path d="M1 5q11-6 22 0" />
      </svg>
    </button>
    <button aria-label="邮件合并设置" className="h-10 w-10">
      <Icon className="text-[#999]">
        <path d="M2.500 5h14v10h-14zM2.500 5l7 6.500 7-6.500M2.500 15 7 9.500M16.500 15 12 9.500" />
      </Icon>
    </button>
  </div>
);

const ScrollButton = ({ down = false }: { down?: boolean }) => (
  <button
    aria-label={down ? '向下滚动' : '向上滚动'}
    className="flex h-[26px] w-[26px] shrink-0 items-center justify-center border-2 border-[#c0c0c0] bg-[#f1f1f1]"
  >
    <svg viewBox="0 0 14 8" className="h-2 w-3.5" fill="#999">
      <path d={down ? 'M0 0h14L7 8z' : 'M0 8h14L7 0z'} />
    </svg>
  </button>
);

const Canvas = () => (
  <div className="flex min-h-0 flex-1">
    <LeftPanel />
    <div className="flex min-w-0 flex-1 bg-[#dadada]">
      <div className="flex w-9 shrink-0 flex-col overflow-hidden pt-3">
        <button aria-label="制表符" className="ml-1 flex h-[30px] w-[30px] shrink-0 items-center justify-center border-2 border-[#c0c0c0]">
          <span className="h-3 w-3 border-b-[5px] border-l-[5px] border-black" />
        </button>
        <div className="mt-[50px] flex min-h-0 flex-1 overflow-hidden">
          <VerticalRuler />
        </div>
      </div>
      <div className="flex min-w-0 flex-1 flex-col items-center overflow-hidden pt-3">
        <HorizontalRuler />
        <article
          className={`mt-[38px] w-[1590px] flex-1 border-x-2 border-t-2 border-[#bbbec2] bg-white pt-[130px] pr-[113px] pl-[226px] text-center text-[128px] leading-[218px] font-bold text-[#2563a7] ${SERIF}`}
        >
          <p className="whitespace-pre">艾 斯 云 科 技</p>
          <p className="underline decoration-red-600 decoration-2 underline-offset-[12px] [text-decoration-skip-ink:none]">
            测试成功
          </p>
        </article>
      </div>
      <div className="flex w-7 shrink-0 flex-col gap-0.5 py-0.5">
        <ScrollButton />
        <div className="flex h-[470px] w-[26px] shrink-0 items-center justify-center border-2 border-[#c0c0c0] bg-[#f1f1f1]">
          <svg viewBox="0 0 10 26" className="h-[26px] w-2.5" stroke="#c0c0c0" strokeWidth="2">
            <path d="M0 1h10M0 5h10M0 9h10M0 13h10M0 17h10M0 21h10M0 25h10" />
          </svg>
        </div>
        <div className="flex-1" />
        <ScrollButton down />
      </div>
    </div>
    <RightPanel />
  </div>
);

const StatusBar = () => (
  <footer className="flex h-[50px] shrink-0 items-center border-t-2 border-[#c0c0c0] bg-[#eeeeee] text-2xl font-bold text-[#333]">
    <span className="w-[1034px] shrink pt-0.5 pl-20">第1页共1页</span>
    <span className="pt-0.5">所有更改已保存</span>
    <div className="flex-1" />
    <div className="flex h-full items-center border-l-2 border-[#c0c0c0] pl-7">
      <button className="flex items-center gap-2">
        English (United States)
        <Caret />
      </button>
      <button aria-label="文档语言" className="ml-3">
        <Icon size={36} strokeWidth={1.1}>
          <path d="M10 2a8 8 0 1 1 0 16 8 8 0 0 1 0-16zM10 2c-4.500 4-4.500 12 0 16 4.500-4 4.500-12 0-16zM2 10h16M3.500 6h13M3.500 14h13M10 2v16" />
        </Icon>
      </button>
      <button
        aria-label="拼写检查"
        className="ml-[22px] flex h-10 w-10 flex-col items-center rounded-sm bg-[#6a7178] pt-1.5 text-sm leading-4 text-white"
      >
        ABC
        <svg viewBox="0 0 16 14" className="ml-3 h-3.5 w-4" fill="none" stroke="#fff" strokeWidth="2">
          <path d="M1 6l5 6 9-11" />
        </svg>
      </button>
    </div>
    <div className="ml-5 flex h-full items-center border-x-2 border-[#c0c0c0] pr-5 pl-4">
      <button aria-label="跟踪修订" className="flex items-center">
        <Icon>
          <path d="M15 6V3H4v14.500h11v-3M6 6.500h6M6 9h5M6 11.500h3M6 14h2M17 6l1.500 1.500L12 15l-2 .500.500-2z" />
        </Icon>
        <Caret />
      </button>
    </div>
    <button aria-label="适合页面" className="ml-5">
      <Icon>
        <path d="M4 3h12v14H4zM10 5v3.500M10 11.500V15M6 10h2.500M11.500 10H14M8.500 6.500 10 5l1.500 1.500M8.500 13.500 10 15l1.500-1.500M7 8.500 5.500 10 7 11.500M13 8.500l1.500 1.500-1.500 1.500" />
      </Icon>
    </button>
    <button aria-label="适合宽度" className="ml-[22px]">
      <Icon>
        <path d="M2.500 5v10.500M17.500 5v10.500M4.500 10h11M7 7.500 4.500 10 7 12.500M13 7.500l2.500 2.500-2.500 2.500" />
      </Icon>
    </button>
    <button aria-label="缩小" className="ml-7">
      <Minus className="h-7 w-7 text-[#222]" />
    </button>
    <span className="ml-[38px] pt-0.5">缩放100%</span>
    <button aria-label="放大" className="ml-[38px]">
      <Plus className="h-8 w-8 text-[#222]" strokeWidth={1.5} />
    </button>
    <svg viewBox="0 0 20 20" className="mr-1 ml-[60px] h-5 w-5 self-end" stroke="#bbb" strokeWidth="2">
      <path d="M0 20 20 0M7 20 20 7M14 20l6-6" />
    </svg>
  </footer>
);

const EditorWindow = () => (
  <section className="absolute top-[166px] right-12 bottom-[276px] left-[244px] flex flex-col overflow-hidden rounded-xl shadow-[0_20px_80px_rgba(0,0,0,0.4)]">
    <TitleBar />
    <TabBar />
    <Toolbar />
    <Canvas />
    <StatusBar />
  </section>
);

export default function App() {
  return (
    <div className={`flex h-screen bg-white p-9 ${FONT}`}>
      <div className="flex min-w-0 flex-1 overflow-hidden rounded-xl shadow-[0_4px_40px_rgba(0,0,0,0.45)]">
        <div className="w-1 shrink-0 bg-gradient-to-b from-[#1c48d0] to-[#3a1488]" />
        <div className="relative flex min-w-0 flex-1">
          <Sidebar />
          <div className="flex min-w-0 flex-1 flex-col">
            <AddressBar />
            <FileToolbar />
            <div className="flex min-h-0 flex-1">
              <FileArea />
              <DetailsPanel />
            </div>
          </div>
          <div className="pointer-events-none absolute inset-x-0 bottom-0 h-14 bg-gradient-to-b from-transparent to-black/8" />
          <EditorWindow />
        </div>
      </div>
    </div>
  );
}
